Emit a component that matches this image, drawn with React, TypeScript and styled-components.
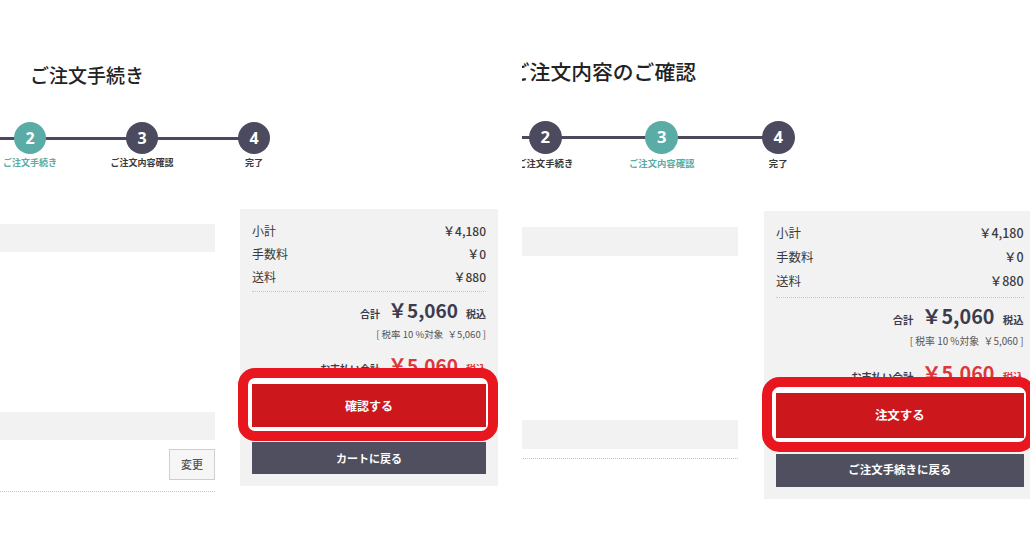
import React from "react";
import styled, { createGlobalStyle } from "styled-components";

const GlobalStyle = createGlobalStyle`
  html, body { margin: 0; padding: 0; background: #fff; }
  body {
    font-family: "Noto Sans CJK JP", "Noto Sans", sans-serif;
    color: #333;
  }
`;

const Canvas = styled.div`
  width: 1030px;
  height: 560px;
  overflow: hidden;
  display: flex;
  background: #fff;
`;

const Shot = styled.section<{ $width: number; $offset: number }>`
  flex: none;
  width: ${(p) => p.$width}px;
  margin-left: ${(p) => p.$offset}px;
  height: 560px;
  overflow: hidden;
`;

const Screen = styled.div<{ $zoom: number; $dx: number; $dy: number }>`
  zoom: ${(p) => p.$zoom};
  margin-left: ${(p) => p.$dx}px;
  margin-top: ${(p) => p.$dy}px;
  width: 520px;
  display: flex;
  flex-direction: column;
`;

const Title = styled.h1<{ $indent: number; $size: number }>`
  margin: 62px 0 0 ${(p) => p.$indent}px;
  font-size: ${(p) => p.$size}px;
  line-height: 26px;
  font-weight: 500;
  color: #222;
  white-space: nowrap;
`;

const Stepper = styled.ol`
  list-style: none;
  align-self: flex-start;
  margin: 34px 0 0 -26px;
  padding: 0;
  display: flex;
  position: relative;
  &::before {
    content: "";
    position: absolute;
    left: -200px;
    right: 56px;
    top: 14.5px;
    height: 3px;
    background: #4b4a5c;
  }
`;

const Step = styled.li`
  width: 112px;
  display: flex;
  flex-direction: column;
  align-items: center;
  position: relative;
  z-index: 1;
`;

const Dot = styled.span<{ $active: boolean }>`
  width: 32px;
  height: 32px;
  border-radius: 50%;
  background: ${(p) => (p.$active ? "#5aaca6" : "#4b4a5e")};
  color: #fff;
  display: flex;
  align-items: center;
  justify-content: center;
  font: 700 16px/1 "Noto Sans", sans-serif;
`;

const StepLabel = styled.span<{ $active: boolean }>`
  margin-top: 3px;
  font-size: 9px;
  line-height: 12px;
  font-weight: 700;
  color: ${(p) => (p.$active ? "#5aaca6" : "#3a3a3a")};
  white-space: nowrap;
`;

const Body = styled.div`
  display: flex;
  gap: 25px;
  margin-top: 40px;
  align-items: flex-start;
`;

const MainCol = styled.div`
  width: 215px;
  display: flex;
  flex-direction: column;
`;

const SectionBar = styled.div<{ $space: number }>`
  height: 28px;
  background: #f2f2f2;
  margin-top: ${(p) => p.$space}px;
`;

const ChangeButton = styled.button`
  align-self: flex-end;
  margin-top: 9px;
  width: 46px;
  height: 31px;
  border: 1px solid #cfcfcf;
  background: #f6f6f6;
  color: #555;
  font: 500 11px/1 "Noto Sans CJK JP", sans-serif;
  padding: 0;
`;

const DottedEnd = styled.div<{ $space: number }>`
  margin-top: ${(p) => p.$space}px;
  border-top: 1px dotted #c4c4c4;
`;

const Summary = styled.aside<{ $width: number }>`
  flex: none;
  width: ${(p) => p.$width}px;
  box-sizing: border-box;
  background: #f2f2f2;
  padding: 10px 12px 12px;
  display: flex;
  flex-direction: column;
`;

const Row = styled.div`
  display: flex;
  justify-content: space-between;
  font-size: 12px;
  line-height: 23px;
  color: #3a3a3a;
`;

const Amount = styled.span`
  font-weight: 500;
`;

const Rule = styled.div`
  margin: 3px 0 6px;
  border-top: 1px dotted #c8c8c8;
`;

const TotalLine = styled.div<{ $space: number }>`
  display: flex;
  justify-content: flex-end;
  align-items: baseline;
  box-sizing: border-box;
  height: 26px;
  padding-top: 2px;
  margin-top: ${(p) => p.$space}px;
  white-space: nowrap;
  & > span {
    line-height: 1;
  }
`;

const TotalLabel = styled.span`
  font-size: 10px;
  font-weight: 700;
  color: #3c3c4a;
  margin-right: 8px;
`;

const TotalAmount = styled.span<{ $red?: boolean }>`
  font-size: 19px;
  font-weight: 700;
  color: ${(p) => (p.$red ? "#dd363b" : "#3c3c4c")};
  margin-right: 8px;
`;

const TaxIn = styled.span<{ $red?: boolean }>`
  font-size: 10px;
  font-weight: 700;
  color: ${(p) => (p.$red ? "#dd363b" : "#3c3c4c")};
`;

const TaxNote = styled.div`
  margin-top: 3px;
  font-size: 9.5px;
  line-height: 14px;
  text-align: right;
  color: #555;
  white-space: pre;
`;

const Highlight = styled.div`
  position: relative;
  margin-top: 5px;
  &::before {
    content: "";
    position: absolute;
    top: -16px;
    bottom: -14px;
    left: -14px;
    right: -12px;
    border: 10px solid #e8161e;
    border-radius: 17px;
    background: #fff;
  }
`;

const PrimaryButton = styled.button`
  position: relative;
  z-index: 1;
  display: block;
  width: 100%;
  height: 43px;
  border: 0;
  background: #cc171d;
  color: #fff;
  font: 700 12px/1 "Noto Sans CJK JP", sans-serif;
  padding: 0;
`;

const BackButton = styled.button`
  position: relative;
  z-index: 1;
  display: block;
  width: 100%;
  height: 32px;
  margin-top: 15px;
  border: 0;
  background: #4f4f5f;
  color: #fff;
  font: 700 11px/1 "Noto Sans CJK JP", sans-serif;
  padding: 0;
`;

type ScreenData = {
  title: string;
  titleIndent: number;
  titleSize: number;
  active: number;
  secondBarSpace: number;
  withChange: boolean;
  endSpace: number;
  summaryWidth: number;
  primary: string;
  back: string;
};

const steps = [
  { n: 2, label: "ご注文手続き" },
  { n: 3, label: "ご注文内容確認" },
  { n: 4, label: "完了" },
];

function CheckoutScreen({ d }: { d: ScreenData }) {
  return (
    <>
      <Title $indent={d.titleIndent} $size={d.titleSize}>
        {d.title}
      </Title>
      <Stepper>
        {steps.map((s) => (
          <Step key={s.n}>
            <Dot $active={s.n === d.active}>{s.n}</Dot>
            <StepLabel $active={s.n === d.active}>{s.label}</StepLabel>
          </Step>
        ))}
      </Stepper>
      <Body>
        <MainCol>
          <SectionBar $space={15} />
          <SectionBar $space={d.secondBarSpace} />
          {d.withChange && <ChangeButton>変更</ChangeButton>}
          <DottedEnd $space={d.endSpace} />
        </MainCol>
        <Summary $width={d.summaryWidth}>
          <Row>
            <span>小計</span>
            <Amount>￥4,180</Amount>
          </Row>
          <Row>
            <span>手数料</span>
            <Amount>￥0</Amount>
          </Row>
          <Row>
            <span>送料</span>
            <Amount>￥880</Amount>
          </Row>
          <Rule />
          <TotalLine $space={0}>
            <TotalLabel>合計</TotalLabel>
            <TotalAmount>￥5,060</TotalAmount>
            <TaxIn>税込</TaxIn>
          </TotalLine>
          <TaxNote>{"[ 税率 10 %対象  ￥5,060 ]"}</TaxNote>
          <TotalLine $space={12}>
            <TotalLabel>お支払い合計</TotalLabel>
            <TotalAmount $red>￥5,060</TotalAmount>
            <TaxIn $red>税込</TaxIn>
          </TotalLine>
          <Highlight>
            <PrimaryButton>{d.primary}</PrimaryButton>
          </Highlight>
          <BackButton>{d.back}</BackButton>
        </Summary>
      </Body>
    </>
  );
}

const left: ScreenData = {
  title: "ご注文手続き",
  titleIndent: 30,
  titleSize: 19,
  active: 2,
  secondBarSpace: 160,
  withChange: true,
  endSpace: 11,
  summaryWidth: 258,
  primary: "確認する",
  back: "カートに戻る",
};

const right: ScreenData = {
  title: "ご注文内容のご確認",
  titleIndent: -5,
  titleSize: 20,
  active: 3,
  secondBarSpace: 158,
  withChange: false,
  endSpace: 8,
  summaryWidth: 262,
  primary: "注文する",
  back: "ご注文手続きに戻る",
};

export default function App() {
  return (
    <>
      <GlobalStyle />
      <Canvas>
        <Shot $width={500} $offset={0}>
          <Screen $zoom={1} $dx={0} $dy={0}>
            <CheckoutScreen d={left} />
          </Screen>
        </Shot>
        <Shot $width={508} $offset={22}>
          <Screen $zoom={1.04} $dx={-7.7} $dy={-5.8}>
            <CheckoutScreen d={right} />
          </Screen>
        </Shot>
      </Canvas>
    </>
  );
}
